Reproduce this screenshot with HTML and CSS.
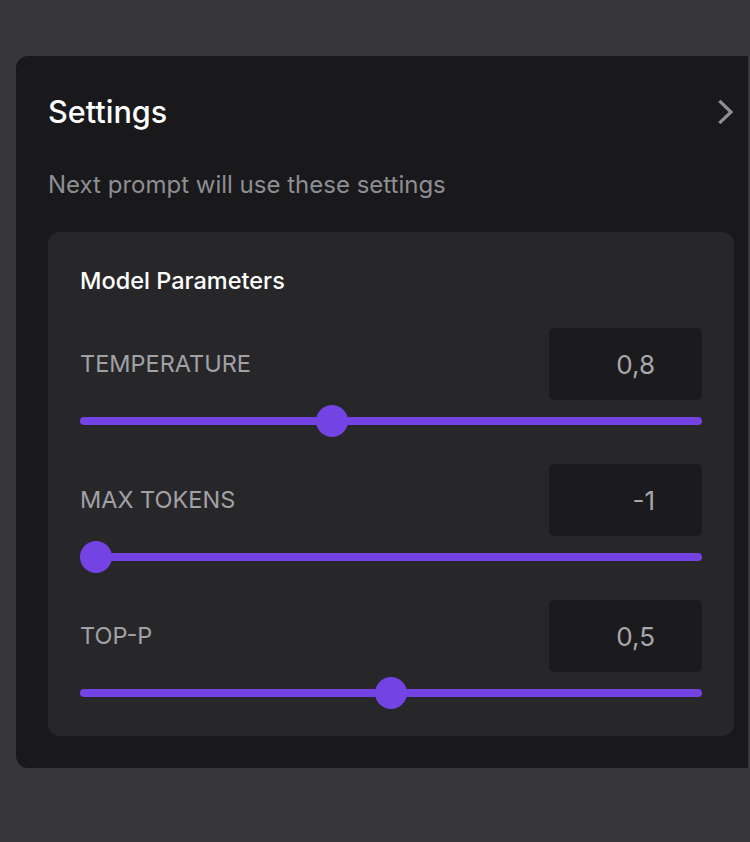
FILE: index.html
```html
<!DOCTYPE html>
<html lang="en">
<head>
<meta charset="utf-8">
<title>Settings</title>
<link rel="stylesheet" href="styles.css">
</head>
<body>
<aside class="panel">
  <header class="panel-header">
    <h1 class="panel-title">Settings</h1>
    <svg class="chevron" width="16" height="24" viewBox="0 0 16 24" aria-hidden="true">
      <polyline points="2.5,2 13,12 2.5,22" fill="none" stroke="currentColor" stroke-width="3.2" stroke-linecap="square" stroke-linejoin="miter"/>
    </svg>
  </header>
  <p class="panel-subtitle">Next prompt will use these settings</p>

  <section class="card">
    <h2 class="card-title">Model Parameters</h2>

    <div class="param">
      <div class="param-row">
        <label class="param-label" for="temp">TEMPERATURE</label>
        <div class="param-value">0,8</div>
      </div>
      <input class="slider" id="temp" type="range" min="0" max="2" step="0.1" value="0.8">
    </div>

    <div class="param">
      <div class="param-row">
        <label class="param-label" for="tokens">MAX TOKENS</label>
        <div class="param-value">-1</div>
      </div>
      <input class="slider" id="tokens" type="range" min="-1" max="4096" step="1" value="-1">
    </div>

    <div class="param">
      <div class="param-row">
        <label class="param-label" for="topp">TOP-P</label>
        <div class="param-value">0,5</div>
      </div>
      <input class="slider" id="topp" type="range" min="0" max="1" step="0.1" value="0.5">
    </div>
  </section>
</aside>
</body>
</html>
```

FILE: styles.css
```css
* { box-sizing: border-box; }

html, body {
  margin: 0;
  padding: 0;
}

body {
  background: #36363b;
  font-family: Inter, "Noto Sans", "Liberation Sans", sans-serif;
  min-height: 842px;
  padding-top: 56px;
  padding-left: 16px;
}

.panel {
  width: 732px;
  background: #19191b;
  border-radius: 12px 0 0 12px;
  padding: 38px 14px 32px 32px;
}

.panel-header {
  display: flex;
  align-items: center;
  justify-content: space-between;
}

.panel-title {
  margin: 0;
  font-size: 30.6px;
  line-height: 36px;
  font-weight: 500;
  color: #ffffff;
}

.chevron {
  color: #8e8e93;
  display: block;
}

.panel-subtitle {
  margin: 41px 0 33px;
  font-size: 24px;
  line-height: 28px;
  color: #8e8e93;
}

.card {
  width: 686px;
  background: #27272a;
  border-radius: 12px;
  padding: 35px 32px 27px;
}

.card-title {
  margin: 0 0 33px;
  font-size: 23.5px;
  line-height: 28px;
  font-weight: 500;
  color: #ffffff;
}

.param + .param {
  margin-top: 27px;
}

.param-row {
  display: flex;
  align-items: center;
  justify-content: space-between;
  height: 72px;
}

.param-label {
  font-size: 23.5px;
  line-height: 28px;
  color: #a1a1a6;
}

.param-value {
  width: 153px;
  height: 72px;
  background: #1b1b1d;
  border-radius: 5px;
  display: flex;
  align-items: center;
  justify-content: flex-end;
  padding-right: 47px;
  font-size: 26px;
  color: #a8a8ad;
}

.slider {
  -webkit-appearance: none;
  appearance: none;
  display: block;
  width: 100%;
  height: 32px;
  margin: 5px 0 0;
  padding: 0;
  background: transparent;
}

.slider::-webkit-slider-runnable-track {
  height: 8px;
  background: #7443e3;
  border-radius: 4px;
}

.slider::-webkit-slider-thumb {
  -webkit-appearance: none;
  appearance: none;
  width: 32px;
  height: 32px;
  border: none;
  border-radius: 50%;
  background: #7443e3;
  margin-top: -12px;
}
```
